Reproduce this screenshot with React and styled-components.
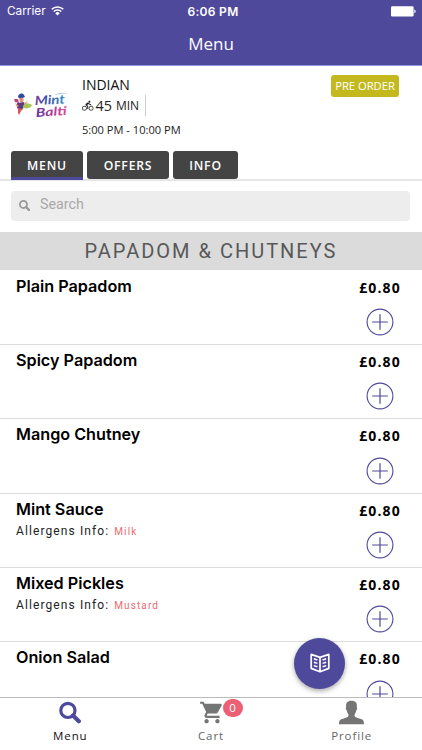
import React from "react";
import styled, { createGlobalStyle } from "styled-components";
import { MdDirectionsBike, MdShoppingCart } from "react-icons/md";

const items = [
  { name: "Plain Papadom", price: "£0.80" },
  { name: "Spicy Papadom", price: "£0.80" },
  { name: "Mango Chutney", price: "£0.80" },
  { name: "Mint Sauce", price: "£0.80", allergens: "Milk" },
  { name: "Mixed Pickles", price: "£0.80", allergens: "Mustard" },
  { name: "Onion Salad", price: "£0.80" },
];

const SearchIcon = ({ size, weight }) => (
  <svg width={size} height={size} viewBox="0 0 22 22" fill="none" stroke="currentColor">
    <circle cx="8.9" cy="8.9" r="7.1" strokeWidth={weight} />
    <path d="M14 14l5.8 5.8" strokeWidth={weight + 1} strokeLinecap="round" />
  </svg>
);

const PlusIcon = () => (
  <svg width="28" height="28" viewBox="0 0 28 28" fill="none" stroke="#4f499c">
    <circle cx="14" cy="14" r="12.9" strokeWidth="1.1" />
    <path d="M6.2 14h15.6M14 6.2v15.6" strokeWidth="1.2" />
  </svg>
);

const WifiIcon = () => (
  <svg width="13" height="10" viewBox="0 0 13 10" fill="none" stroke="#fff" strokeWidth="1.5">
    <path d="M.7 3.3a8.2 8.2 0 0 1 11.6 0M2.7 5.5a5.4 5.4 0 0 1 7.6 0" />
    <path d="M6.5 9.4L4.3 7.2a3.1 3.1 0 0 1 4.4 0z" fill="#fff" stroke="none" />
  </svg>
);

const BatteryIcon = () => (
  <svg width="25" height="11" viewBox="0 0 25 11" fill="#fff">
    <rect x="0" y="0.3" width="22.6" height="10.2" rx="1.3" />
    <path d="M23.3 3.6c1.8.6 1.8 3 0 3.6z" />
  </svg>
);

const BookIcon = () => (
  <svg width="20" height="20" viewBox="0 0 20 20" fill="none" stroke="#fff" strokeWidth="1.7">
    <path d="M10 4.4L1.2 1.4v14L10 18.8l8.8-3.4v-14zv14.4" strokeLinejoin="round" />
    <path
      d="M3.8 5.8l3.6 1.2M3.8 9.2l3.6 1.2M3.8 12.6l3.6 1.2M16.2 5.8l-3.6 1.2M16.2 9.2l-3.6 1.2M16.2 12.6l-3.6 1.2"
      strokeWidth="1.5"
    />
  </svg>
);

const PersonIcon = () => (
  <svg width="25" height="25" viewBox="0 0 25 25" fill="#757575">
    <path d="M0 24.3c0-3.6.8-4.6 3.2-5.3 3.2-1 5.8-1.5 6.2-2.9.2-.8 0-1.7-.4-2.3-.8-1.1-1.1-2.3-1.3-3.5-.9-.5-1.2-2.6-.5-3.1C6.6 3 8.2.8 12.5.8s5.9 2.2 5.3 6.4c.7.5.4 2.6-.5 3.1-.2 1.2-.5 2.4-1.3 3.5-.4.6-.6 1.5-.4 2.3.4 1.4 3 1.9 6.2 2.9 2.4.7 3.2 1.7 3.2 5.3z" />
  </svg>
);

const Logo = () => (
  <svg width="58" height="30" viewBox="0 0 58 30">
    <defs>
      <linearGradient id="mint" x1="0" x2="1">
        <stop offset="0" stopColor="#7b3fa0" />
        <stop offset="0.4" stopColor="#3a50a8" />
        <stop offset="1" stopColor="#3d8fc8" />
      </linearGradient>
      <linearGradient id="balti" x1="0" x2="1">
        <stop offset="0" stopColor="#5f3298" />
        <stop offset="0.6" stopColor="#b43a9a" />
        <stop offset="1" stopColor="#e2508f" />
      </linearGradient>
    </defs>
    <path d="M5 6c0-3 4-5 6-2l1 2-5 2z" fill="#344a9c" />
    <path d="M1 8l4 0 1 4-4-1z" fill="#b8477f" />
    <circle cx="8.5" cy="9" r="2.2" fill="#dc9270" />
    <path d="M4 12l7-1 1 5-4 3-4-2z" fill="#613988" />
    <path d="M10 15c2-4 6-3 9-1-1 3-5 4-9 3z" fill="#a7c557" />
    <path d="M2 12l4 3-2 1zM11 12l4-2-3 4z" fill="#e39563" />
    <path d="M5 17l5 1-2 2-2 4-1-2z" fill="#d9535c" />
    <LogoText x="22" y="14" fontSize="12.5" textLength="30" fill="url(#mint)" transform="rotate(-3 22 14)">
      Mint
    </LogoText>
    <path d="M41 3.6c4-1 8-1.200 14-.8-5 .1-9 .3-14 .8z" fill="#3d8fc8" />
    <LogoText x="23" y="26" fontSize="12" textLength="31" fill="url(#balti)" transform="rotate(-4 23 26)">
      Balti
    </LogoText>
  </svg>
);

const App = () => {
  return (
    <Screen>
      <GlobalStyle />
      <Header>
        <StatusBar>
          <Carrier>
            Carrier <WifiIcon />
          </Carrier>
          <Clock>6:06 PM</Clock>
          <BatteryIcon />
        </StatusBar>
        <Title>Menu</Title>
      </Header>

      <Restaurant>
        <Logo />
        <Details>
          <Cuisine>INDIAN</Cuisine>
          <Delivery>
            <MdDirectionsBike size={11.5} />
            <Minutes>45</Minutes> MIN
          </Delivery>
          <Hours>5:00 PM - 10:00 PM</Hours>
        </Details>
        <PreOrder>PRE ORDER</PreOrder>
      </Restaurant>

      <Tabs>
        <Tab $width={72} $active>
          MENU
        </Tab>
        <Tab $width={82}>OFFERS</Tab>
        <Tab $width={65}>INFO</Tab>
      </Tabs>

      <SearchArea>
        <SearchBox>
          <SearchIcon size={11} weight={3.6} />
          <input type="text" placeholder="Search" />
        </SearchBox>
      </SearchArea>

      <SectionTitle>PAPADOM &amp; CHUTNEYS</SectionTitle>

      <List>
        {items.map((item) => (
          <Item key={item.name}>
            <div>
              <ItemName>{item.name}</ItemName>
              {item.allergens && (
                <Allergens>
                  Allergens Info: <span>{item.allergens}</span>
                </Allergens>
              )}
            </div>
            <ItemSide>
              <Price>{item.price}</Price>
              <AddButton aria-label="Add">
                <PlusIcon />
              </AddButton>
            </ItemSide>
          </Item>
        ))}
      </List>

      <BottomNav>
        <NavItem $active>
          <SearchIcon size={22} weight={3.2} />
          <span>Menu</span>
        </NavItem>
        <NavItem>
          <CartIcon size={26} />
          <Badge>0</Badge>
          <span>Cart</span>
        </NavItem>
        <NavItem>
          <PersonIcon />
          <span>Profile</span>
        </NavItem>
      </BottomNav>

      <FloatingButton aria-label="Categories">
        <BookIcon />
      </FloatingButton>
    </Screen>
  );
};

// Styles ****************************************
const GlobalStyle = createGlobalStyle`
  * {
    box-sizing: border-box;
  }

  body {
    margin: 0;
    background: #fff;
  }

  button {
    padding: 0;
    border: none;
    background: none;
    cursor: pointer;
  }
`;

const Screen = styled.div`
  position: relative;
  display: flex;
  flex-direction: column;
  width: 422px;
  height: 750px;
  overflow: hidden;
  background: #fff;
  color: #222;
  font-family: "Open Sans", sans-serif;
`;

const Header = styled.header`
  height: 66px;
  flex: none;
  background: #4f499c;
  border-bottom: 1px solid #8d9be0;
  color: #fff;
`;

const StatusBar = styled.div`
  display: grid;
  grid-template-columns: 1fr auto 1fr;
  align-items: center;
  height: 22px;
  padding: 0 6px 0 7px;
  font-family: Inter, sans-serif;
  font-size: 12px;

  > svg {
    justify-self: end;
  }
`;

const Carrier = styled.div`
  display: flex;
  align-items: center;
  gap: 5px;
  font-size: 11.8px;
`;

const Clock = styled.div`
  margin-left: 3px;
  font-weight: 600;
  letter-spacing: 0.3px;
`;

const Title = styled.h1`
  margin: 0;
  font-size: 17px;
  font-weight: 400;
  line-height: 44px;
  text-align: center;
`;

const Restaurant = styled.section`
  display: flex;
  height: 85px;
  flex: none;
  padding: 9px 23px 0 13px;

  > svg {
    flex: none;
    margin-top: 16px;
  }
`;

const Details = styled.div`
  flex: 1;
  margin-left: 11px;
`;

const Cuisine = styled.div`
  font-size: 14px;
  line-height: 20px;
  color: #111;
`;

const Delivery = styled.div`
  display: flex;
  align-items: center;
  width: 64px;
  height: 21px;
  border-right: 1px solid #ccc;
  font-size: 12px;
  white-space: nowrap;

  > svg {
    flex: none;
  }
`;

const Minutes = styled.span`
  margin: 0 4px 0 2px;
  font-size: 14.4px;
`;

const Hours = styled.div`
  margin-top: 5px;
  font-size: 11.1px;
  line-height: 18px;
`;

const PreOrder = styled.button`
  width: 68px;
  height: 22px;
  && {
    background: #c3b91f;
    padding-bottom: 1px;
  }
  border-radius: 3px;
  color: #fff;
  font-family: inherit;
  font-size: 11.2px;
`;

const Tabs = styled.nav`
  display: flex;
  gap: 4px;
  height: 30px;
  flex: none;
  padding-left: 11px;
  border-bottom: 2px solid #e6e6e6;
`;

const Tab = styled.button`
  && {
    background: #444;
    border-bottom: ${(props) => (props.$active ? "3px solid #4f499c" : "none")};
    padding-top: ${(props) => (props.$active ? "2px" : 0)};
  }
  width: ${(props) => props.$width}px;
  height: ${(props) => (props.$active ? 29 : 28)}px;
  border-radius: ${(props) => (props.$active ? "3px 3px 0 0" : "3px")};
  color: #fff;
  font-family: inherit;
  font-size: 12.2px;
  font-weight: 600;
  letter-spacing: 0.8px;
`;

const SearchArea = styled.div`
  height: 51px;
  flex: none;
  padding: 10px 12px 0 11px;
`;

const SearchBox = styled.label`
  display: flex;
  align-items: center;
  height: 30px;
  padding: 0 8px;
  border-radius: 4px;
  background: #ededed;
  color: #999;

  > svg {
    flex: none;
    margin-bottom: 2px;
  }

  input {
    flex: 1;
    margin: 0 0 4px 10px;
    padding: 0;
    border: none;
    outline: none;
    background: none;
    font-family: Roboto, sans-serif;
    font-size: 14.3px;
  }

  input::placeholder {
    color: #a8a8a8;
  }
`;

const SectionTitle = styled.h2`
  height: 38px;
  flex: none;
  margin: 0;
  background: #dbdbdb;
  color: #585858;
  font-family: Roboto, sans-serif;
  font-size: 20px;
  font-weight: 400;
  letter-spacing: 2px;
  line-height: 39px;
  text-align: center;
`;

const List = styled.main`
  flex: 1;
  min-height: 0;
  padding-top: 0.6px;
  overflow: hidden;
`;

const Item = styled.article`
  display: flex;
  justify-content: space-between;
  height: 74.33px;
  padding: 5px 20px 0 16px;
  border-bottom: 1px solid #dcdcdc;
`;

const ItemName = styled.h3`
  margin: 0;
  color: #000;
  font-family: Inter, sans-serif;
  font-size: 16.2px;
  font-weight: 600;
  line-height: 20px;
`;

const Allergens = styled.div`
  margin-top: 4px;
  font-family: Roboto, sans-serif;
  font-size: 12px;
  letter-spacing: 1.1px;
  line-height: 16px;

  span {
    margin-left: 1px;
    color: #ec6b70;
    font-size: 10px;
  }
`;

const ItemSide = styled.div`
  display: flex;
  flex-direction: column;
  align-items: center;
  width: 45px;
`;

const Price = styled.div`
  margin: 1px 0 0 1px;
  color: #000;
  font-size: 14px;
  font-weight: 700;
  letter-spacing: 1.1px;
  line-height: 21px;
`;

const AddButton = styled.button`
  display: flex;
  margin-top: 10.5px;
`;

const BottomNav = styled.nav`
  display: grid;
  grid-template-columns: repeat(3, 1fr);
  height: 53px;
  flex: none;
  border-top: 1px solid #bbb;
  background: #fff;
`;

const NavItem = styled.div`
  position: relative;
  display: flex;
  flex-direction: column;
  align-items: center;
  color: ${(props) => (props.$active ? "#4f499c" : "#757575")};
  font-size: 11.5px;

  > svg {
    height: 29px;
    flex: none;
  }

  > span {
    color: ${(props) => (props.$active ? "#111" : "#666")};
    letter-spacing: 0.9px;
    line-height: 17px;
  }
`;

const CartIcon = styled(MdShoppingCart)`
  margin-left: 2px;
`;

const Badge = styled.div`
  position: absolute;
  top: 1px;
  left: 82px;
  width: 20px;
  height: 18px;
  border-radius: 9px;
  background: #ec5f74;
  color: #fff;
  line-height: 18px;
  text-align: center;
`;

const FloatingButton = styled.button`
  position: absolute;
  left: 294px;
  top: 637.5px;
  display: flex;
  align-items: center;
  justify-content: center;
  width: 51px;
  height: 51px;
  && {
    background: #4f499c;
  }
  border-radius: 50%;
  box-shadow: 0 2px 5px rgba(0, 0, 0, 0.35);
`;

const LogoText = styled.text.attrs({ lengthAdjust: "spacingAndGlyphs" })`
  font-family: Lato, sans-serif;
  font-style: italic;
  font-weight: 700;
`;

export default App;
